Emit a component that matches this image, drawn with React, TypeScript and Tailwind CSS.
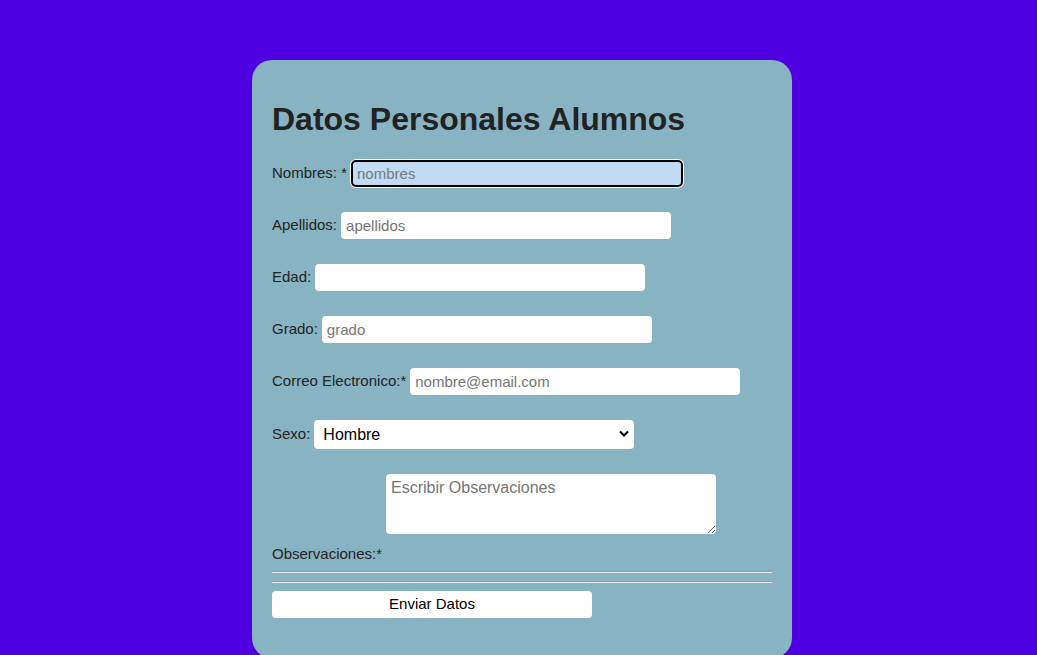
import React from "react";

export default function App() {
  const font = { fontFamily: '"Liberation Sans", Arial, sans-serif' };
  return (
    <div className="min-h-[655px] w-full bg-[#4f00e0] pt-[60px] pl-[252px]" style={font}>
      <div className="w-[540px] rounded-[20px] bg-[#87b3c3] px-[20px] pt-[20px] pb-[40px] text-[#242424]">
        <h1 className="mt-[21px] mb-[22px] text-[32px] leading-[37px] font-bold text-[#222]">Datos Personales Alumnos</h1>
        <form className="flex flex-col text-[15px]" onSubmit={(e) => e.preventDefault()}>
          <div className="flex h-[27px] items-center gap-[4px]">
            <label>Nombres: *</label>
            <input
              placeholder="nombres"
              className="h-[27px] w-[332px] rounded-[5px] border-2 border-black bg-[#c0dbf3] px-[4px] text-[15px] text-black shadow-[0_0_0_1px_#ffffff] outline-none placeholder:text-[#707a82]"
            />
          </div>
          <div className="mt-[25px] flex h-[27px] items-center gap-[4px]">
            <label>Apellidos:</label>
            <input
              placeholder="apellidos"
              className="h-[27px] w-[330px] rounded-[4px] bg-white px-[5px] text-[15px] text-black outline-none placeholder:text-[#757575]"
            />
          </div>
          <div className="mt-[25px] flex h-[27px] items-center gap-[4px]">
            <label>Edad:</label>
            <input className="h-[27px] w-[330px] rounded-[4px] bg-white px-[5px] text-[15px] text-black outline-none" />
          </div>
          <div className="mt-[25px] flex h-[27px] items-center gap-[4px]">
            <label>Grado:</label>
            <input
              placeholder="grado"
              className="h-[27px] w-[330px] rounded-[4px] bg-white px-[5px] text-[15px] text-black outline-none placeholder:text-[#757575]"
            />
          </div>
          <div className="mt-[25px] flex h-[27px] items-center gap-[4px]">
            <label>Correo Electronico:*</label>
            <input
              placeholder="nombre@email.com"
              className="h-[27px] w-[330px] rounded-[4px] bg-white px-[5px] text-[15px] text-black outline-none placeholder:text-[#757575]"
            />
          </div>
          <div className="mt-[25px] flex h-[29px] items-center gap-[4px]">
            <label>Sexo:</label>
            <div className="relative h-[29px] w-[320px]">
              <select className="h-[29px] w-[320px] appearance-none rounded-[4px] bg-white pl-[9px] text-[16px] text-black outline-none">
                <option>Hombre</option>
                <option>Mujer</option>
              </select>
              <svg
                className="pointer-events-none absolute right-[5px] top-[10px]"
                width="10"
                height="8"
                viewBox="0 0 10 8"
              >
                <path d="M1 1.5 L5 5.5 L9 1.5" fill="none" stroke="#000" strokeWidth="2.2" />
              </svg>
            </div>
          </div>
          <div className="mt-[25px] pl-[114px]">
            <textarea
              placeholder="Escribir Observaciones"
              className="block h-[60px] w-[330px] resize rounded-[4px] bg-white px-[5px] py-[5px] text-[16px] leading-[18px] text-black outline-none placeholder:text-[#757575]"
            />
          </div>
          <label className="mt-[11px] leading-[17px]">Observaciones:*</label>
          <div className="mt-[9px] h-[2px] w-[500px] border-t border-t-[#9a9a9a] border-b border-b-[#f0f0f0]" />
          <div className="mt-[8px] h-[2px] w-[500px] border-t border-t-[#9a9a9a] border-b border-b-[#f0f0f0]" />
          <button
            type="submit"
            className="mt-[8px] h-[27px] w-[320px] rounded-[4px] bg-white text-[15px] text-black"
          >
            Enviar Datos
          </button>
        </form>
      </div>
    </div>
  );
}
